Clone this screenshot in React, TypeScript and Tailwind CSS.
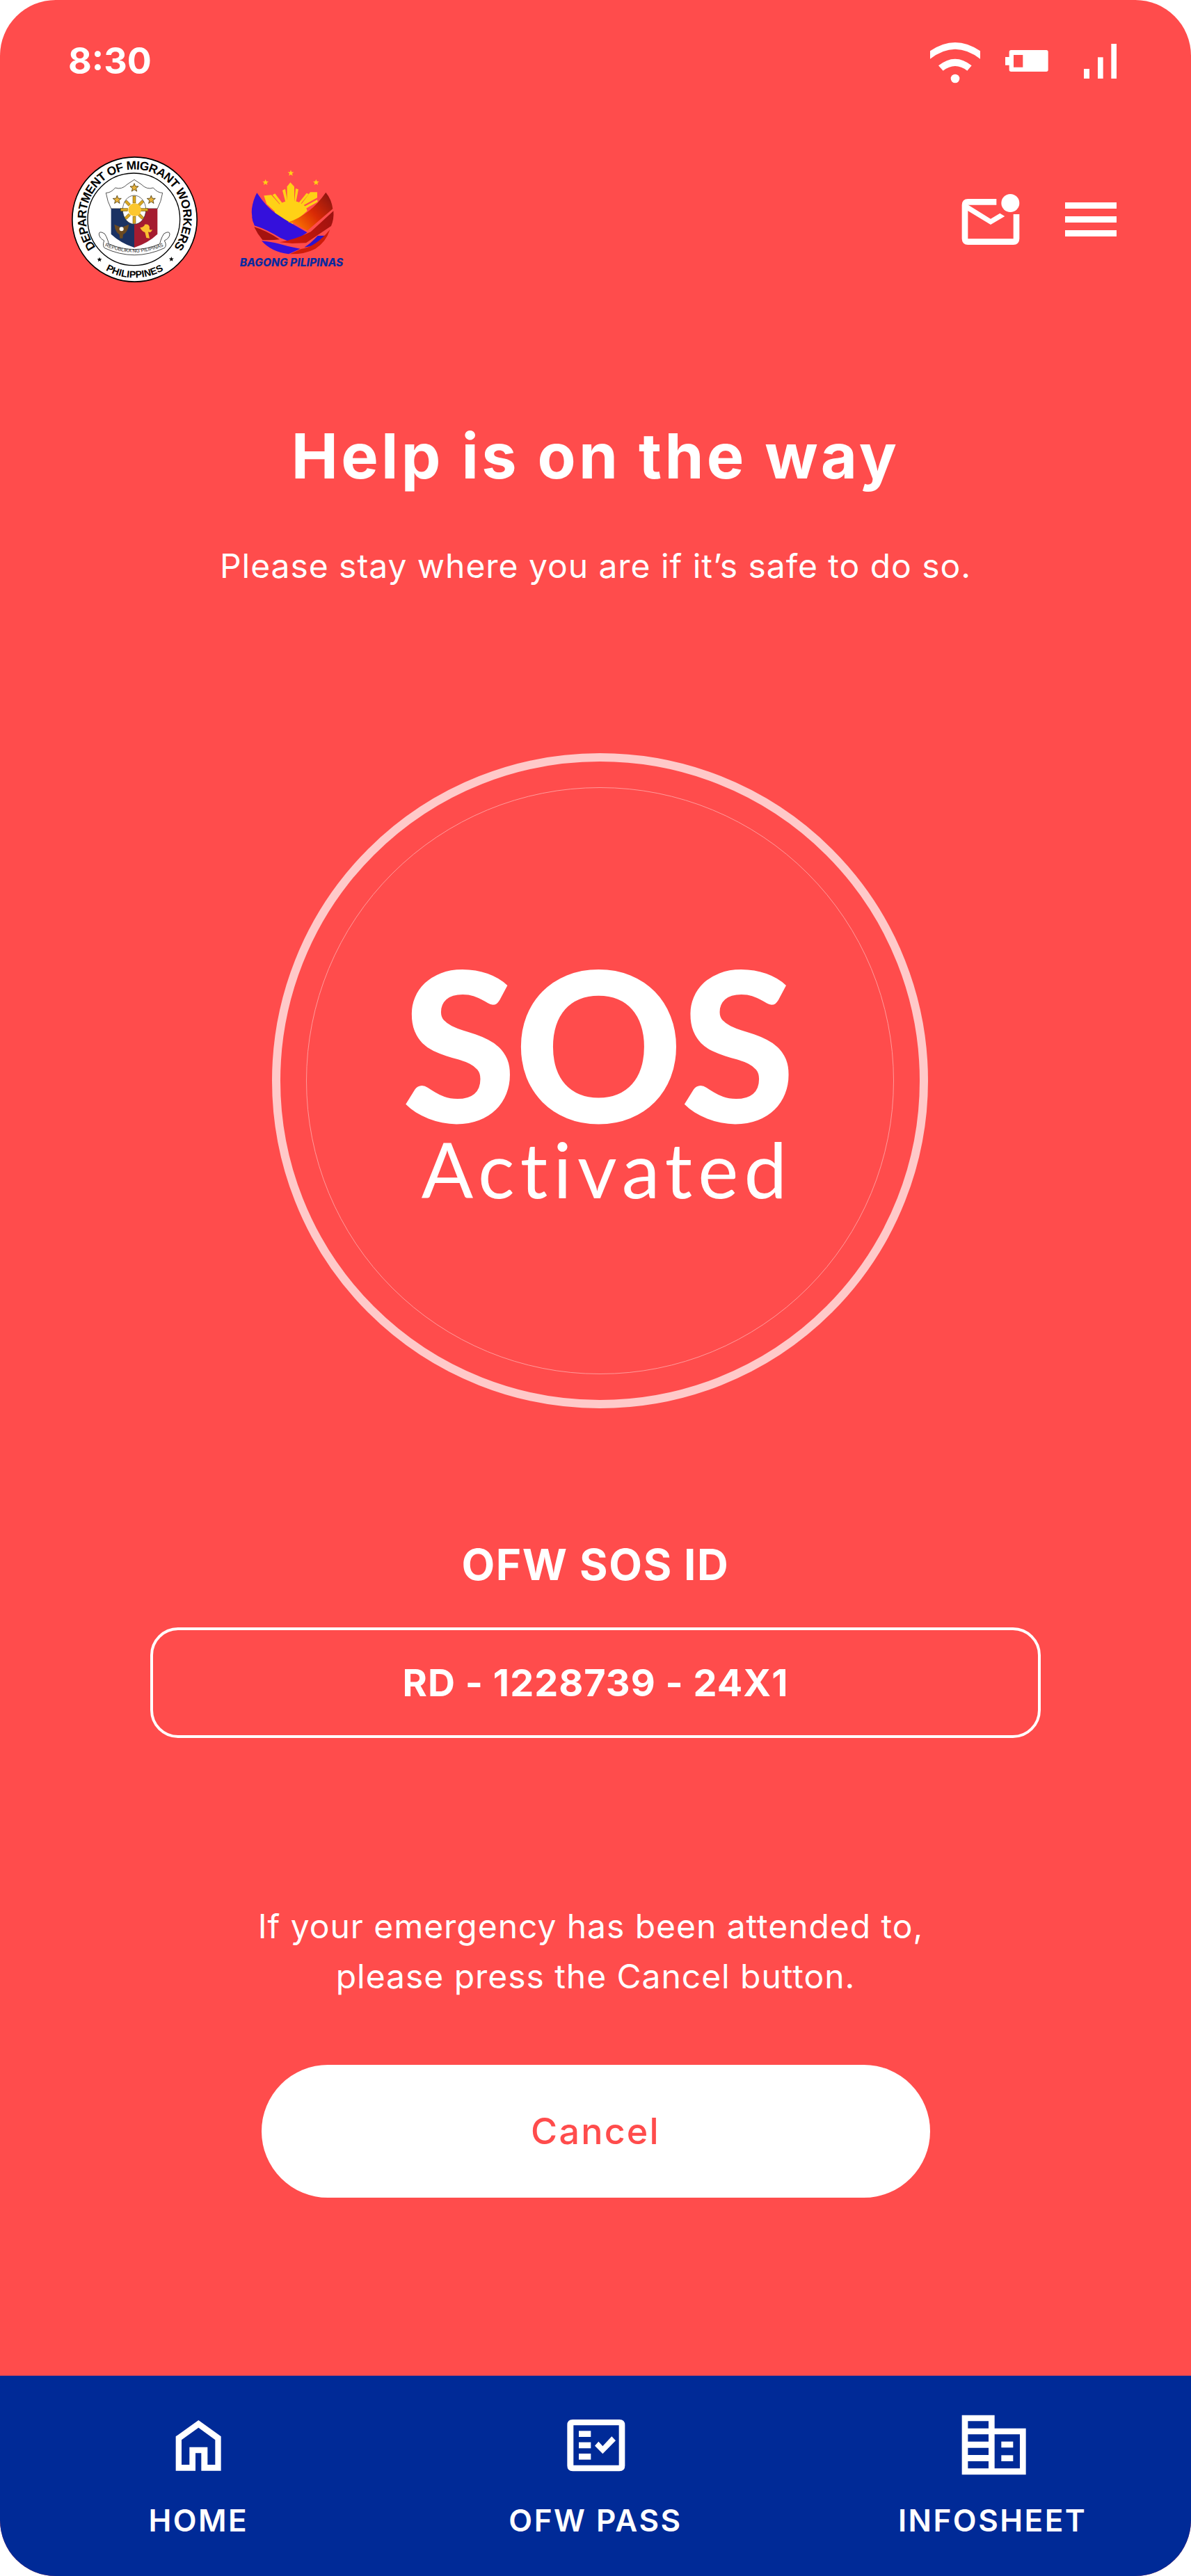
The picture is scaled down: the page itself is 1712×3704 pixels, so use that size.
import React from "react";

function Star({ cx, cy, r, fill, stroke }: { cx: number; cy: number; r: number; fill: string; stroke?: string }) {
  const pts: string[] = [];
  for (let i = 0; i < 10; i++) {
    const a = (-90 + i * 36) * (Math.PI / 180);
    const rr = i % 2 === 0 ? r : r * 0.42;
    pts.push(`${cx + rr * Math.cos(a)},${cy + rr * Math.sin(a)}`);
  }
  return <polygon points={pts.join(" ")} fill={fill} stroke={stroke} strokeWidth={stroke ? 2.5 : 0} />;
}

function Seal() {
  const rays = [0, 45, 90, 135, 180, 225, 270, 315];
  return (
    <svg width="181" height="181" viewBox="130 105 543 543" className="block shrink-0">
      <defs>
        <path id="sealTop" d="M 234 497 A 210 210 0 1 1 570 497" />
        <path id="sealBottom" d="M 239.5 569.5 A 252 252 0 0 0 563.5 569.5" />
        <path id="sealRibbon" d="M 270 490 Q 400 548 530 490" />
      </defs>
      <circle cx="401.5" cy="376.5" r="269" fill="#fff" stroke="#000" strokeWidth="5" />
      <circle cx="398" cy="376" r="199" fill="#fff" stroke="#000" strokeWidth="4" />
      <text fill="#000" fontFamily="Liberation Sans, sans-serif" fontWeight="700" fontSize="52">
        <textPath href="#sealTop" textLength="930" lengthAdjust="spacing">DEPARTMENT OF MIGRANT WORKERS</textPath>
      </text>
      <text fill="#000" fontFamily="Liberation Sans, sans-serif" fontWeight="700" fontSize="42">
        <textPath href="#sealBottom" startOffset="50%" textAnchor="middle">PHILIPPINES</textPath>
      </text>
      <Star cx={250} cy={550} r={11} fill="#000" />
      <Star cx={560} cy={548} r={11} fill="#000" />
      <path d="M278 262 Q300 262 318 240 Q345 250 370 225 L400 205 L430 225 Q455 250 482 240 Q500 262 522 262 Q516 300 500 330 L300 330 Q284 300 278 262 Z" fill="#fff" stroke="#333" strokeWidth="2.5" />
      <path d="M300 330 H400 V498 Q340 478 300 440 Z" fill="#1b3263" />
      <path d="M500 330 H400 V498 Q460 478 500 440 Z" fill="#a51c30" />
      <ellipse cx="400" cy="335" rx="50" ry="62" fill="#fff" stroke="#222" strokeWidth="2" />
      {rays.map((d) => (
        <rect key={d} x="394" y={d % 90 === 0 ? 276 : 282} width="12" height={d % 90 === 0 ? 30 : 24} fill="#d9a520" stroke="#5b4500" strokeWidth="1.5" transform={`rotate(${d} 400 335)`} />
      ))}
      <circle cx="402" cy="335" r="28" fill="#fcc72e" />
      <Star cx={400} cy={240} r={19} fill="#e9b23a" stroke="#4a3a10" />
      <Star cx={326} cy={292} r={19} fill="#e9b23a" stroke="#4a3a10" />
      <Star cx={473} cy={292} r={19} fill="#e9b23a" stroke="#4a3a10" />
      <path d="M314 398 L345 412 L377 398 Q372 432 352 442 L350 458 L338 458 L336 442 Q318 432 314 398 Z" fill="#6b4a22" />
      <circle cx="345" cy="418" r="9" fill="#fff" />
      <path d="M425 412 Q445 408 445 398 Q465 395 466 412 Q462 426 478 420 Q472 436 460 430 L466 458 L452 456 L446 432 Q434 430 425 412 Z" fill="#fbc230" />
      <path d="M272 438 Q248 424 248 440 Q250 458 270 468 Q262 490 272 500 Q400 560 530 500 Q542 488 530 468 Q552 458 553 440 Q552 424 528 438 L520 452 Q512 470 510 482 Q400 530 290 482 Q288 470 280 452 Z" fill="#fff" stroke="#222" strokeWidth="2.5" />
      <text fill="#222" fontFamily="Liberation Sans, sans-serif" fontSize="21">
        <textPath href="#sealRibbon" startOffset="50%" textAnchor="middle">REPUBLIKA NG PILIPINAS</textPath>
      </text>
    </svg>
  );
}

function BagongLogo() {
  return (
    <svg width="160" height="160" viewBox="0 0 480 480" className="block shrink-0">
      <defs>
        <linearGradient id="bpRed" x1="240" y1="270" x2="400" y2="130" gradientUnits="userSpaceOnUse">
          <stop offset="0" stopColor="#ff7a00" />
          <stop offset="0.5" stopColor="#d92a05" />
          <stop offset="1" stopColor="#8a1410" />
        </linearGradient>
        <linearGradient id="bpRed2" x1="190" y1="340" x2="415" y2="210" gradientUnits="userSpaceOnUse">
          <stop offset="0" stopColor="#d81a08" />
          <stop offset="1" stopColor="#9c1210" />
        </linearGradient>
      </defs>
      <Star cx={234} cy={42} r={14} fill="#ffd116" />
      <Star cx={125} cy={82} r={14} fill="#ffd116" />
      <Star cx={343} cy={82} r={14} fill="#ffd116" />
      <g fill="#ffd116">
        <polygon points="232,82 249,100 249,178 218,178 218,100" />
        <polygon points="198,116 210,110 222,176 214,178" />
        <polygon points="255,108 267,112 254,178 248,178" />
        <polygon points="118,139 150,136 198,190 170,212 130,175" />
        <polygon points="155,136 166,130 206,182 198,188" />
        <polygon points="348,124 318,124 278,178 286,182 348,148" />
        <polygon points="302,128 312,132 270,182 262,178" />
        <polygon points="348,156 350,166 300,194 292,186" />
        <path d="M165 218 A 70 50 0 0 1 305 205 L 240 262 Z" />
      </g>
      <path d="M88 127 Q130 190 170 216 Q205 240 236 258 L305 298 L240 342 L190 322 Q130 285 78 268 Q62 225 66 195 Q72 155 88 127 Z" fill="#3410dc" />
      <path d="M385 125 Q410 155 415 196 L305 290 L250 258 L222 254 Q320 220 385 125 Z" fill="url(#bpRed)" />
      <path d="M418 205 Q421 240 408 270 L300 343 L240 345 L185 340 Q250 330 320 295 Z" fill="url(#bpRed2)" />
      <path d="M76 274 Q130 290 186 328 Q150 332 112 330 Q90 305 76 274 Z" fill="#a5120f" />
      <path d="M66 228 L95 272 L78 268 Q68 250 66 228 Z" fill="#3410dc" />
      <path d="M108 334 Q150 338 180 346 Q225 360 275 368 L225 391 Q150 382 108 334 Z" fill="#3410dc" />
      <path d="M390 311 Q372 338 352 352 L292 362 Q320 345 350 312 Z" fill="#2c14cc" />
      <path d="M403 285 Q385 340 340 368 Q295 392 230 391 L278 369 Q340 362 403 285 Z" fill="#cf1c0a" />
      <text x="14" y="443" fill="#0b2a9f" fontFamily="Inter, sans-serif" fontWeight="800" fontStyle="italic" fontSize="47" textLength="446" lengthAdjust="spacingAndGlyphs">BAGONG PILIPINAS</text>
    </svg>
  );
}

function Wifi() {
  return (
    <svg width="74" height="60" viewBox="405 180 222 180" fill="#fff" className="block">
      <path d="M408 220 Q516 146 624 220 V254 Q516 170 408 254 Z" />
      <path d="M444 283 Q516 225 587 283 L568 305 Q516 265 464 305 Z" />
      <circle cx="516" cy="339" r="19" />
    </svg>
  );
}

function Battery() {
  return (
    <svg width="62" height="32" viewBox="735 217 186 96" fill="#fff" className="block">
      <path fillRule="evenodd" d="M735 247 H752 V225 Q752 217 760 217 H912 Q920 217 920 225 V302 Q920 310 912 310 H760 Q752 310 752 302 V282 H735 Z M771 238 V291 H811 V238 Z" />
    </svg>
  );
}

function Signal() {
  return (
    <svg width="47" height="50" viewBox="1074 189 141 150" fill="#fff" className="block">
      <rect x="1074" y="297" width="24" height="42" />
      <rect x="1134" y="247" width="23" height="92" />
      <rect x="1192" y="189" width="23" height="150" />
    </svg>
  );
}

function Mail() {
  return (
    <svg width="84" height="74" viewBox="546 828 252 222" className="block">
      <path d="M697 862 H574 Q561 862 561 875 V1021 Q561 1034 574 1034 H770 Q783 1034 783 1021 V915" fill="none" stroke="#fff" strokeWidth="26" />
      <polygon points="572,873 672,935 712,911 733,924 672,960 572,899" fill="#fff" />
      <circle cx="757" cy="867" r="39" fill="#fff" />
    </svg>
  );
}

function MenuIcon() {
  return (
    <div className="flex w-[74px] flex-col gap-[11px]">
      <div className="h-[9px] bg-white" />
      <div className="h-[9px] bg-white" />
      <div className="h-[9px] bg-white" />
    </div>
  );
}

function HomeIcon() {
  return (
    <svg width="130" height="110" viewBox="0 0 390 330" fill="#fff" className="block">
      <path fillRule="evenodd" d="M98 130 L196 60 L293 130 V278 H208 V202 H183 V278 H98 Z M123 145 V252 H157 V176 H235 V252 H268 V145 L196 92 Z" />
    </svg>
  );
}

function PassIcon() {
  return (
    <svg width="130" height="110" viewBox="0 0 390 330" fill="#fff" className="block">
      <path fillRule="evenodd" d="M97 57 H298 Q322 57 322 81 V256 Q322 280 298 280 H97 Q73 280 73 256 V81 Q73 57 97 57 Z M100 82 V254 H296 V82 Z" />
      <rect x="123" y="106" width="52" height="26" />
      <rect x="123" y="155" width="52" height="26" />
      <rect x="123" y="204" width="52" height="26" />
      <polygon points="192,170 208,152 226,172 265,130 282,148 226,205" />
    </svg>
  );
}

function InfoIcon() {
  return (
    <svg width="130" height="110" viewBox="0 0 390 330" fill="#fff" className="block">
      <path fillRule="evenodd" d="M62 38 H203 V95 H338 V295 H62 Z M88 64 V95 H177 V64 Z M88 121 V152 H177 V121 Z M88 179 V210 H177 V179 Z M88 237 V268 H177 V237 Z M203 121 V268 H312 V121 Z" />
      <rect x="232" y="152" width="51" height="26" />
      <rect x="232" y="211" width="51" height="26" />
    </svg>
  );
}

function NavItem({ icon, label }: { icon: React.ReactNode; label: string }) {
  return (
    <div className="flex flex-col items-center">
      {icon}
      <span className="mt-[24px] text-[44px] leading-[60px] font-semibold tracking-[2.5px] text-white">{label}</span>
    </div>
  );
}

export default function App() {
  return (
    <div className="bg-white font-[family-name:Inter,sans-serif]">
      <div className="flex h-[3704px] w-[1712px] flex-col overflow-hidden rounded-[80px] bg-[#ff4c4c] text-white">
        <div className="flex h-[225px] items-start justify-between pt-[60px] pr-[107px] pl-[98px]">
          <span className="mt-[2px] text-[52px] leading-[52px] font-bold">8:30</span>
          <div className="flex items-start">
            <Wifi />
            <div className="mt-[12px] ml-[35px]"><Battery /></div>
            <div className="mt-[3px] ml-[51px]"><Signal /></div>
          </div>
        </div>

        <div className="flex h-[181px] items-center justify-between pr-[107px] pl-[103px]">
          <div className="flex items-center">
            <Seal />
            <div className="mt-[-2px] ml-[56px]"><BagongLogo /></div>
          </div>
          <div className="flex items-center">
            <Mail />
            <div className="ml-[65px]"><MenuIcon /></div>
          </div>
        </div>

        <h1 className="mt-[200px] text-center text-[90px] leading-[100px] font-bold tracking-[4.3px]">Help is on the way</h1>
        <p className="mt-[72px] text-center text-[48px] leading-[72px] font-normal tracking-[0.95px]">Please stay where you are if it’s safe to do so.</p>

        <div className="mt-[233px] ml-[391px] h-[942px] w-[943px] rounded-full border-[12px] border-[#ffc9c9] p-[37px]">
          <div className="flex h-full w-full flex-col items-center rounded-full border border-[#ff9a9a]">
            <span className="mt-[245px] mr-[8px] font-[family-name:Lato,sans-serif] text-[300px] leading-[240px] font-black tracking-[-4px]">SOS</span>
            <span className="mt-[7px] ml-[20px] font-[family-name:Lato,sans-serif] text-[110px] leading-[110px] font-normal tracking-[8.2px]">Activated</span>
          </div>
        </div>

        <div className="mt-[185px] text-center text-[62px] leading-[80px] font-bold tracking-[1.6px]">OFW SOS ID</div>
        <div className="mx-auto mt-[50px] flex h-[159px] w-[1280px] items-center justify-center rounded-[40px] border-[4px] border-white text-[54px] font-bold tracking-[1px]">
          RD - 1228739 - 24X1
        </div>

        <p className="mt-[235px] text-center text-[48px] leading-[72px] font-normal tracking-[0.95px]">
          <span className="mr-[14px]">If your emergency has been attended to,</span>
          <br />
          please press the Cancel button.
        </p>

        <div className="mt-[91px] flex justify-center">
          <button className="h-[191px] w-[961px] rounded-full bg-white text-[52px] font-medium tracking-[2.2px] text-[#ff4c4c]">Cancel</button>
        </div>

        <nav className="mt-auto grid h-[288px] grid-cols-3 bg-[#002a97] pt-[44px]">
          <NavItem icon={<HomeIcon />} label="HOME" />
          <NavItem icon={<PassIcon />} label="OFW PASS" />
          <NavItem icon={<InfoIcon />} label="INFOSHEET" />
        </nav>
      </div>
    </div>
  );
}
